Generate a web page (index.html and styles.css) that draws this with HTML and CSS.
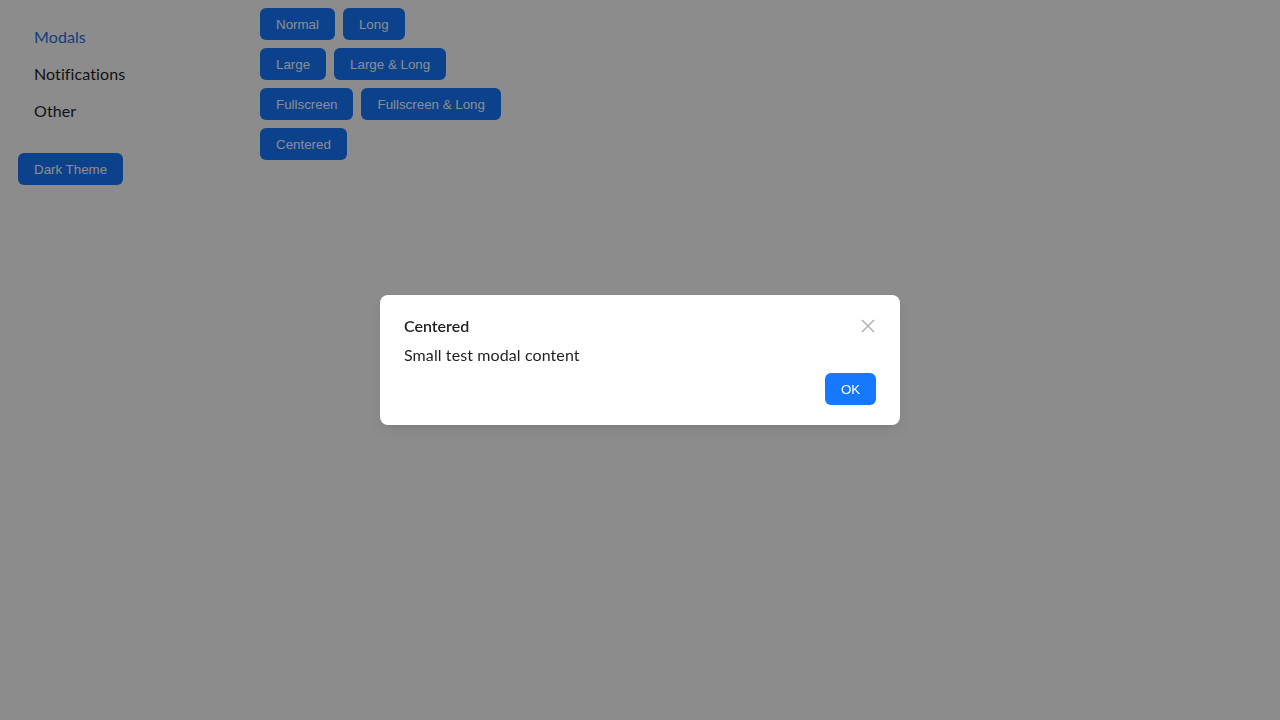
FILE: index.html
```html
<!DOCTYPE html>
<html>
<head>
<meta charset="utf-8">
<link rel="stylesheet" href="styles.css">
</head>
<body>
<div class="app">
  <aside class="sidebar">
    <nav class="nav">
      <a class="nav-link active">Modals</a>
      <a class="nav-link">Notifications</a>
      <a class="nav-link">Other</a>
    </nav>
    <button class="btn">Dark Theme</button>
  </aside>
  <main class="main">
    <div class="row"><button class="btn">Normal</button><button class="btn">Long</button></div>
    <div class="row"><button class="btn">Large</button><button class="btn">Large &amp; Long</button></div>
    <div class="row"><button class="btn">Fullscreen</button><button class="btn">Fullscreen &amp; Long</button></div>
    <div class="row"><button class="btn">Centered</button></div>
  </main>
</div>
<div class="overlay">
  <div class="modal">
    <div class="modal-head">
      <div class="modal-title">Centered</div>
      <button class="close" aria-label="Close">
        <svg width="14" height="14" viewBox="0 0 14 14"><path d="M1 1L13 13M13 1L1 13" stroke="#b3b3b3" stroke-width="1.6" fill="none"/></svg>
      </button>
    </div>
    <div class="modal-body">Small test modal content</div>
    <div class="modal-foot"><button class="btn ok">OK</button></div>
  </div>
</div>
</body>
</html>
```
FILE: styles.css
```css
html, body { margin: 0; padding: 0; height: 100%; }
body { background: #fff; font-family: "Segoe UI", Lato, "Noto Sans", sans-serif; color: #1f1f1f; }
.app { display: flex; height: 100%; }
.sidebar { width: 242px; padding: 18px 0 0 18px; display: flex; flex-direction: column; align-items: flex-start; }
.nav { display: flex; flex-direction: column; margin-bottom: 24px; }
.nav-link { font-size: 16px; line-height: 37px; padding: 0 16px; color: #1f1f1f; letter-spacing: 0.1px; }
.nav-link.active { color: #1f6fe5; }
.main { padding: 8px 0 0 0; display: flex; flex-direction: column; gap: 8px; }
.row { display: flex; gap: 8px; }
.btn { font-family: "Liberation Sans", Arial, sans-serif; font-size: 13.333px; height: 32px; padding: 0 16px; border: none; border-radius: 6px; background: #1677ff; color: #fff; }
.overlay { position: fixed; inset: 0; background: rgba(0,0,0,0.45); display: flex; align-items: center; justify-content: center; }
.modal { width: 520px; box-sizing: border-box; background: #fff; border-radius: 8px; padding: 20px 24px 20px 24px; box-shadow: 0 6px 16px rgba(0,0,0,0.08), 0 3px 6px -4px rgba(0,0,0,0.12); }
.modal-head { display: flex; justify-content: space-between; align-items: center; height: 22px; }
.modal-title { font-weight: 600; font-size: 16px; line-height: 22px; color: #1f1f1f; }
.close { background: none; border: none; padding: 0; margin-right: 1px; display: flex; }
.modal-body { font-size: 16px; line-height: 22px; margin-top: 7px; color: #1f1f1f; letter-spacing: 0.1px; }
.modal-foot { display: flex; justify-content: flex-end; margin-top: 7px; }
.ok { padding: 0 16px; width: 51px; }
```
